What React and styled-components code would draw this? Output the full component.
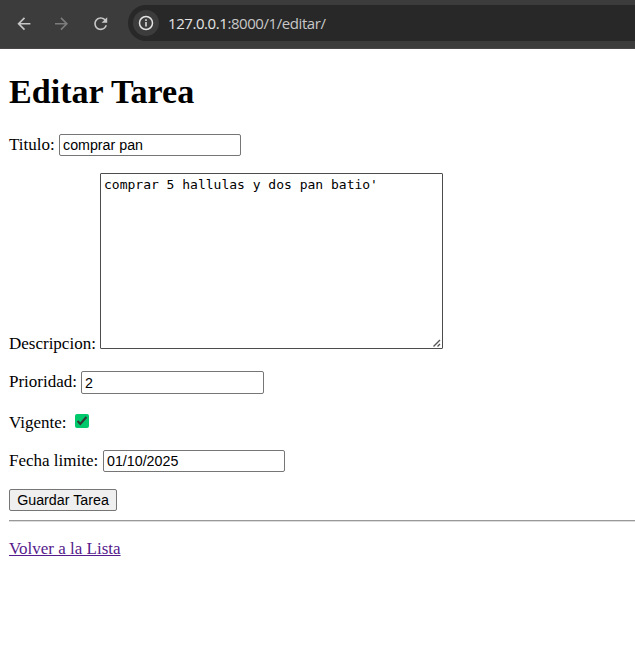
import React from "react";
import styled, { createGlobalStyle } from "styled-components";

const Global = createGlobalStyle`
  body { margin: 0; background: #fff; overflow: hidden; }
  * { box-sizing: border-box; }
`;
const Page = styled.div`
  font: 17px/20px "Liberation Serif", serif;
  color: #000;
  height: 664px;
`;
const Toolbar = styled.header`
  height: 49px;
  background: #3c3c3c;
  border-bottom: 1px solid #4a4648;
  display: flex;
  align-items: center;
  padding: 0 0 2px 15px;
`;
const NavButton = styled.span`
  width: 18px;
  height: 18px;
  margin-right: ${(p) => p.$gap}px;
  color: ${(p) => (p.$off ? "#7c7c7c" : "#c7c7c7")};
  svg { display: block; }
`;
const AddressBar = styled.div`
  flex: 1;
  height: 36px;
  border-radius: 18px 0 0 18px;
  background: #282828;
  display: flex;
  align-items: center;
  padding-left: 5px;
`;
const InfoBadge = styled.span`
  width: 26px;
  height: 26px;
  border-radius: 50%;
  background: #3c3c3c;
  display: grid;
  place-items: center;
`;
const Url = styled.span`
  margin-left: 9px;
  font: 15px/20px "Open Sans", "Noto Sans", sans-serif;
  letter-spacing: -0.43px;
  color: #c7c7c7;
`;
const Host = styled.span`
  color: #e3e3e3;
`;
const Content = styled.main`
  padding: 0 0 0 9px;
`;
const Title = styled.h1`
  margin: 0;
  padding-top: 23px;
  height: 85px;
  font-size: 34.1px;
  line-height: 40px;
`;
const Row = styled.div`
  display: flex;
  align-items: flex-start;
  height: ${(p) => p.$h}px;
`;
const Label = styled.label`
  width: ${(p) => p.$w}px;
  padding-top: ${(p) => p.$top || 0}px;
  white-space: nowrap;
`;
const Input = styled.input`
  width: ${(p) => p.$w || 182}px;
  height: ${(p) => p.$h || 22}px;
  border: 1px solid #767676;
  border-radius: 2px;
  padding: 1px 3px;
  font: 14.25px "Liberation Sans", sans-serif;
  outline: none;
`;
const AreaWrap = styled.div`
  position: relative;
  width: 343px;
  height: 176px;
`;
const Area = styled.textarea`
  display: block;
  width: 100%;
  height: 100%;
  border: 1px solid #4c4c4c;
  border-radius: 1px;
  padding: 2px 3px;
  margin: 0;
  font: 13px/18px "DejaVu Sans Mono", monospace;
  outline: none;
  resize: none;
`;
const Grip = styled.svg`
  position: absolute;
  right: 2px;
  bottom: 2px;
`;
const Check = styled.span`
  width: 14px;
  height: 14px;
  margin-top: 1px;
  border-radius: 2px;
  background: #00c96b;
  svg { display: block; }
`;
const Button = styled.button`
  width: 108px;
  height: 22px;
  padding: 0;
  border: 1px solid #767676;
  border-radius: 2px;
  background: #efefef;
  font: 14.25px "Liberation Sans", sans-serif;
  color: #000;
`;
const Rule = styled.div`
  height: 2px;
  border-top: 1px solid #999;
  border-bottom: 1px solid #ddd;
`;
const Link = styled.a`
  display: inline-block;
  margin-top: 17px;
  color: #551a8b;
  text-decoration: underline;
`;

export default function App() {
  return (
    <Page>
      <Global />
      <Toolbar>
        <NavButton $gap={20}><svg width="18" height="18" viewBox="1 0 22.2 22.2" fill="currentColor"><path d="M20 11H7.830l5.590-5.590L12 4l-8 8 8 8 1.410-1.410L7.830 13H20z" /></svg></NavButton>
        <NavButton $gap={20} $off><svg width="18" height="18" viewBox="1.5 0 22.2 22.2" fill="currentColor"><path d="M12 4l-1.410 1.410L16.170 11H4v2h12.170l-5.580 5.590L12 20l8-8z" /></svg></NavButton>
        <NavButton $gap={19}><svg width="18" height="18" viewBox="0 0.1 22.2 22.2" fill="currentColor"><path d="M17.650 6.350A7.958 7.958 0 0 0 12 4c-4.420 0-7.990 3.580-7.990 8s3.570 8 7.990 8c3.730 0 6.840-2.550 7.730-6h-2.080A5.990 5.990 0 0 1 12 18c-3.310 0-6-2.690-6-6s2.690-6 6-6c1.660 0 3.140.690 4.220 1.780L13 11h7V4z" /></svg></NavButton>
        <AddressBar>
          <InfoBadge><svg width="16" height="16" viewBox="0 0 16 16" fill="none" stroke="#e3e3e3" strokeWidth="1.5"><circle cx="8" cy="8" r="6.5" /><path d="M8 7v4.500M8 4.300v1.600" /></svg></InfoBadge>
          <Url><Host>127.0.0.1</Host>:8000/1/editar/</Url>
        </AddressBar>
      </Toolbar>
      <Content>
        <Title>Editar Tarea</Title>
        <Row $h={39}><Label $w={50} $top={1}>Titulo:</Label><Input defaultValue="comprar pan" /></Row>
        <Row $h={198}><Label $w={91} $top={161}>Descripcion:</Label><AreaWrap><Area spellCheck={false} defaultValue="comprar 5 hallulas y dos pan batio'" /><Grip width="8" height="8" viewBox="0 0 8 8" stroke="#555" strokeWidth="1.4"><path d="M.5 7.500 7 1M4.500 7.500 7 5" /></Grip></AreaWrap></Row>
        <Row $h={42}><Label $w={72} $top={1}>Prioridad:</Label><Input $w={183} $h={23} defaultValue="2" /></Row>
        <Row $h={37}><Label $w={66}>Vigente:</Label><Check><svg width="14" height="14" viewBox="0 0 14 14" fill="none" stroke="#303b36" strokeWidth="2.2"><path d="m2.600 7 2.700 2.900L11.400 3" /></svg></Check></Row>
        <Row $h={39}><Label $w={94} $top={1}>Fecha limite:</Label><Input defaultValue="01/10/2025" /></Row>
        <Row $h={31}><Button>Guardar Tarea</Button></Row>
        <Rule />
        <Link>Volver a la Lista</Link>
      </Content>
    </Page>
  );
}
